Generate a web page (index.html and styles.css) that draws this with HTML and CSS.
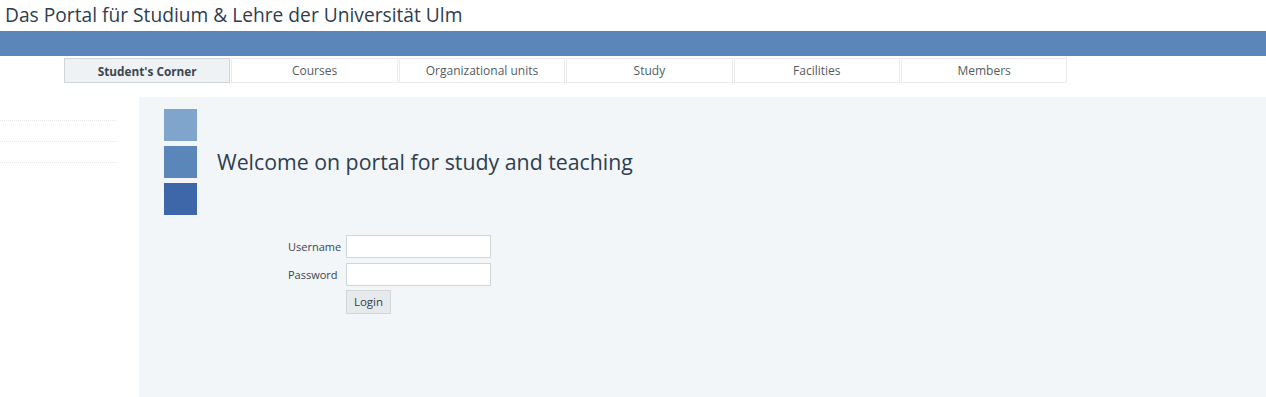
FILE: index.html
```html
<!DOCTYPE html>
<html lang="en">
<head>
<meta charset="utf-8">
<title>Das Portal für Studium &amp; Lehre der Universität Ulm</title>
<link rel="stylesheet" href="styles.css">
</head>
<body>
<header class="site-header">
  <div class="site-title">Das Portal für Studium &amp; Lehre der Universität Ulm</div>
</header>
<div class="blue-bar"></div>
<nav class="tabs">
  <a class="tab active" href="#">Student's Corner</a>
  <a class="tab" href="#">Courses</a>
  <a class="tab" href="#">Organizational units</a>
  <a class="tab" href="#">Study</a>
  <a class="tab" href="#">Facilities</a>
  <a class="tab" href="#">Members</a>
</nav>
<div class="page">
  <aside class="sidebar">
    <div class="side-item"></div>
    <div class="side-item"></div>
    <div class="side-item"></div>
  </aside>
  <main class="main">
    <div class="welcome">
      <div class="squares">
        <span class="sq sq1"></span>
        <span class="sq sq2"></span>
        <span class="sq sq3"></span>
      </div>
      <h1 class="welcome-title">Welcome on portal for study and teaching</h1>
    </div>
    <form class="login">
      <label class="lbl" for="u">Username</label>
      <input class="field" id="u" type="text">
      <label class="lbl" for="p">Password</label>
      <input class="field" id="p" type="password">
      <span></span>
      <div class="btn-row"><button class="btn" type="button">Login</button></div>
    </form>
  </main>
</div>
</body>
</html>
```
FILE: styles.css
```css
* { box-sizing: border-box; }
html, body { margin: 0; padding: 0; background: #fff; }
body {
  font-family: "Open Sans", "DejaVu Sans", sans-serif;
  color: #2d3b4c;
  overflow: hidden;
}
.site-header {
  height: 31px;
  padding-left: 5px;
}
.site-title {
  font-size: 19.2px;
  line-height: 30px;
  color: #2f3d4e;
}
.blue-bar {
  height: 25px;
  background: #5a86ba;
}
.tabs {
  display: flex;
  gap: 1px;
  margin: 2px 0 0 64px;
}
.tab {
  width: 166.4px;
  height: 25px;
  border: 1px solid #ebebeb;
  display: flex;
  align-items: center;
  justify-content: center;
  font-size: 12px;
  color: #555b62;
  text-decoration: none;
  background: #fff;
}
.tab.active {
  background: #eef2f5;
  border-color: #cfd4d8;
  font-weight: 700;
  font-size: 11.8px;
  color: #3c4550;
}
.page {
  display: flex;
  margin-top: 14px;
}
.sidebar {
  width: 117px;
  flex: none;
  margin-right: 22px;
  padding-top: 3px;
}
.side-item {
  height: 21px;
  border-bottom: 1px dotted #e6e6e6;
}
.main {
  flex: 1;
  background: #f3f6f8;
  min-height: 300px;
  padding: 12px 25px;
}
.welcome {
  display: flex;
  align-items: center;
  gap: 20px;
}
.squares {
  display: flex;
  flex-direction: column;
  gap: 5px;
}
.sq {
  display: block;
  width: 33px;
  height: 32px;
}
.sq1 { background: #7fa5cd; }
.sq2 { background: #5a86ba; }
.sq3 { background: #3e67a9; }
.welcome-title {
  margin: 0;
  font-size: 21.3px;
  font-weight: 400;
  color: #2d3e50;
  line-height: 30px;
}
.login {
  display: grid;
  grid-template-columns: 53px 145px;
  column-gap: 5px;
  row-gap: 5px;
  align-items: center;
  margin: 20px 0 0 124px;
}
.lbl {
  font-size: 11px;
  color: #3a4450;
  text-align: left;
  white-space: nowrap;
}
.field {
  width: 145px;
  height: 23px;
  border: 1px solid #d3d6d8;
  background: #fff;
  padding: 0 4px;
  font-family: inherit;
  font-size: 12px;
}
.btn-row {
  margin-top: -2px;
}
.btn {
  height: 24px;
  width: 45px;
  padding: 0;
  border: 1px solid #d3d6d8;
  background: #e7eaec;
  font-family: inherit;
  font-size: 11.5px;
  color: #333c46;
}
```
